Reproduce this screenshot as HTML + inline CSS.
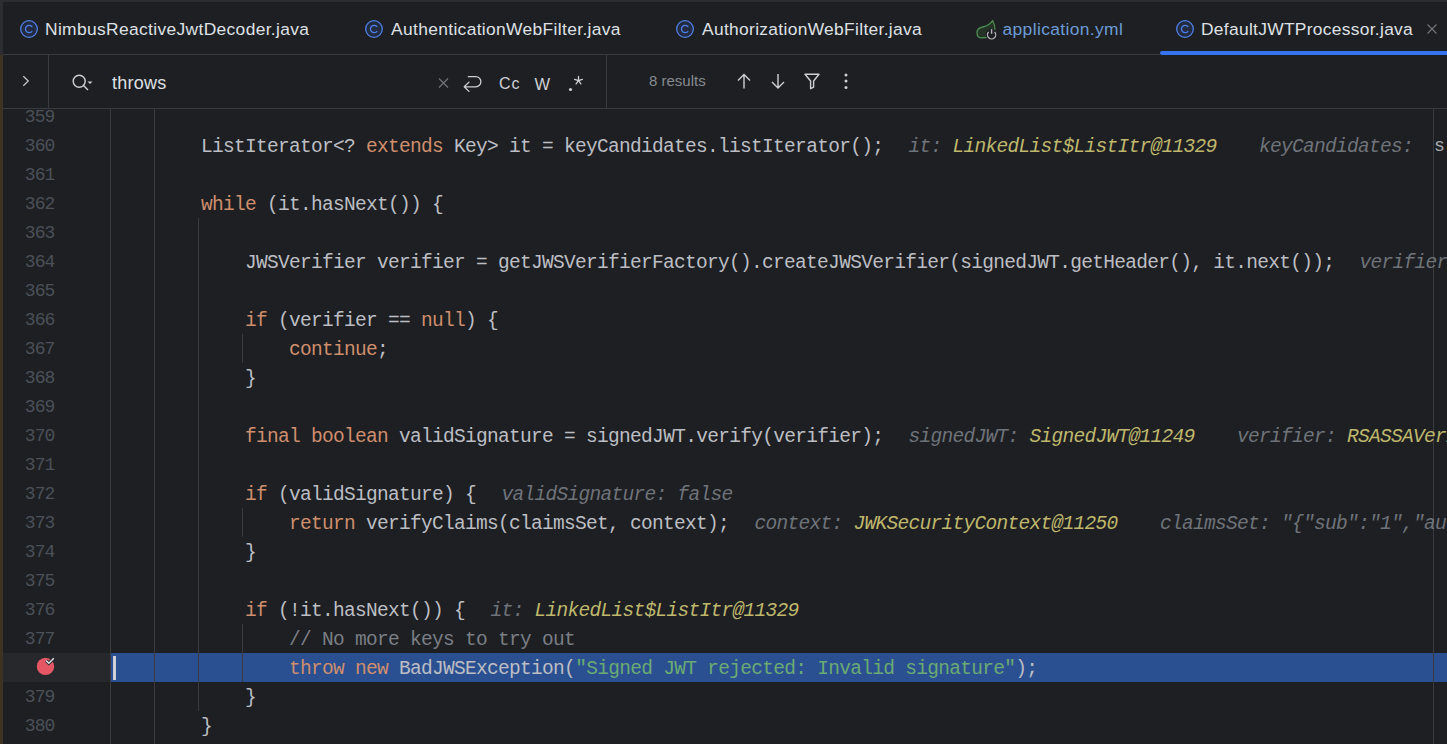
<!DOCTYPE html>
<html><head><meta charset="utf-8"><style>
*{margin:0;padding:0;box-sizing:border-box}
html,body{width:1447px;height:744px;overflow:hidden;background:#1e1f22}
body{position:relative;font-family:"Liberation Sans",sans-serif}
.abs{position:absolute}
.hb{position:absolute;height:1px;background:#393b40}
.vb{position:absolute;width:1px;background:#393b40}
.tab{position:absolute;top:19px;font-size:17.4px;letter-spacing:0.35px;color:#dfe1e5;white-space:pre;line-height:20px}
.cicon{position:absolute;top:20px;width:18px;height:18px}
.sb{position:absolute;white-space:pre;line-height:20px}
.code{position:absolute;left:113px;font-family:"Liberation Mono",monospace;font-size:19.5px;letter-spacing:-0.7px;white-space:pre;color:#bcbec4;line-height:29px;height:29px;margin-top:2px}
.ln{position:absolute;left:0;width:54.5px;text-align:right;font-family:"Liberation Mono",monospace;font-size:18px;letter-spacing:-0.9px;color:#4b5059;line-height:29px;white-space:pre;margin-top:1px}
.k{color:#cf8e6d}
.s{color:#6aab73}
.c{color:#7a7e85}
.hn{color:#6f737a;font-style:italic}
.hv{color:#bfb86c;font-style:italic}
.guide{position:absolute;width:1px;background:#393b40}
</style></head><body>
<div class="abs" style="left:0;top:0;width:1447px;height:2px;background:#2b2d30"></div>
<svg class="cicon" style="left:20px" viewBox="0 0 18 18"><circle cx="9" cy="9" r="8.3" fill="#222b40" stroke="#4f80e8" stroke-width="1.3"/><path d="M12.2 6.9A3.7 3.7 0 1 0 12.2 11.1" fill="none" stroke="#4f80e8" stroke-width="1.3"/></svg>
<div class="tab" style="left:45px">NimbusReactiveJwtDecoder.java</div>
<svg class="cicon" style="left:365px" viewBox="0 0 18 18"><circle cx="9" cy="9" r="8.3" fill="#222b40" stroke="#4f80e8" stroke-width="1.3"/><path d="M12.2 6.9A3.7 3.7 0 1 0 12.2 11.1" fill="none" stroke="#4f80e8" stroke-width="1.3"/></svg>
<div class="tab" style="left:391px">AuthenticationWebFilter.java</div>
<svg class="cicon" style="left:676px" viewBox="0 0 18 18"><circle cx="9" cy="9" r="8.3" fill="#222b40" stroke="#4f80e8" stroke-width="1.3"/><path d="M12.2 6.9A3.7 3.7 0 1 0 12.2 11.1" fill="none" stroke="#4f80e8" stroke-width="1.3"/></svg>
<div class="tab" style="left:702px;letter-spacing:0.32px">AuthorizationWebFilter.java</div>
<svg class="abs" style="left:970px;top:14px" width="32" height="30" viewBox="0 0 32 30"><path d="M22.6 6.5C20.5 10.5 17 12 12.5 13C8.5 14 6.8 16.5 7 19.2C7.3 22 9 23.8 11 23.8L17 23.5C21 22.5 24.5 20 25 17C25.2 13 24 9 22.6 6.5Z" fill="#243325" stroke="#4b8f53" stroke-width="1.3" stroke-linejoin="round"/><circle cx="21.6" cy="20.6" r="5.9" fill="#1e1f22"/><path d="M18.6 18A4.1 4.1 0 1 0 24.6 18" fill="none" stroke="#b4b6bb" stroke-width="1.3"/><path d="M21.6 15.2V19.8" stroke="#b4b6bb" stroke-width="1.4"/></svg>
<div class="tab" style="left:1002.5px;color:#6c9bd6;letter-spacing:0.38px">application.yml</div>
<svg class="cicon" style="left:1176px" viewBox="0 0 18 18"><circle cx="9" cy="9" r="8.3" fill="#222b40" stroke="#4f80e8" stroke-width="1.3"/><path d="M12.2 6.9A3.7 3.7 0 1 0 12.2 11.1" fill="none" stroke="#4f80e8" stroke-width="1.3"/></svg>
<div class="tab" style="left:1201px;letter-spacing:0.3px">DefaultJWTProcessor.java</div>
<svg class="abs" style="left:1426px;top:23px" width="12" height="12" viewBox="0 0 12 12"><path d="M1.5 1.5L10.5 10.5M10.5 1.5L1.5 10.5" stroke="#6f737a" stroke-width="1.2"/></svg>
<div class="abs" style="left:1160px;top:51px;width:287px;height:4px;background:#3574f0;border-radius:2px 0 0 2px"></div>
<div class="hb" style="left:3px;top:54px;width:1157px"></div>
<div class="vb" style="left:48px;top:55px;height:53px"></div>
<svg class="abs" style="left:20px;top:74px" width="12" height="14" viewBox="0 0 12 14"><path d="M3.3 2.3L8.3 7L3.3 11.7" fill="none" stroke="#c9cbd0" stroke-width="1.2"/></svg>
<svg class="abs" style="left:71px;top:73px" width="24" height="20" viewBox="0 0 24 20"><circle cx="8.2" cy="8.2" r="6" fill="none" stroke="#ced0d6" stroke-width="1.4"/><path d="M12.5 12.5L17 17" stroke="#ced0d6" stroke-width="1.4"/><path d="M16.5 8.5H21.5L19 11Z" fill="#ced0d6"/></svg>
<div class="sb" style="left:112px;top:72.5px;font-size:18px;letter-spacing:0.25px;color:#dfe1e5">throws</div>
<svg class="abs" style="left:437px;top:77px" width="13" height="12" viewBox="0 0 13 12"><path d="M2 1.5L11 10.5M11 1.5L2 10.5" stroke="#6f737a" stroke-width="1.2"/></svg>
<svg class="abs" style="left:462px;top:75px" width="21" height="18" viewBox="0 0 21 18"><path d="M6.3 1.6H13.8A5.1 5.1 0 0 1 13.8 11.8H2.4M7 7.1L2.2 11.8L7 16.4" fill="none" stroke="#ced0d6" stroke-width="1.3" stroke-linecap="round" stroke-linejoin="round"/></svg>
<div class="sb" style="left:499px;top:73.5px;font-size:16px;letter-spacing:1px;color:#ced0d6">Cc</div>
<div class="sb" style="left:534.5px;top:73.7px;font-size:16.5px;color:#ced0d6">W</div>
<svg class="abs" style="left:566px;top:74px" width="20" height="20" viewBox="0 0 20 20"><circle cx="4.5" cy="15.5" r="1.6" fill="#ced0d6"/><path d="M12.5 6.6V2.4M12.5 6.6L16.4 5.3M12.5 6.6L14.9 9.9M12.5 6.6L10.1 9.9M12.5 6.6L8.6 5.3" stroke="#ced0d6" stroke-width="1.3" stroke-linecap="round"/></svg>
<div class="vb" style="left:606px;top:55px;height:53px"></div>
<div class="sb" style="left:649px;top:71px;font-size:15px;color:#868a91">8 results</div>
<svg class="abs" style="left:736px;top:73px" width="16" height="17" viewBox="0 0 16 17"><path d="M8 15.5V1.5M2 7.5L8 1.5L14 7.5" fill="none" stroke="#ced0d6" stroke-width="1.4"/></svg>
<svg class="abs" style="left:770px;top:73px" width="16" height="17" viewBox="0 0 16 17"><path d="M8 1V15M2 9L8 15L14 9" fill="none" stroke="#ced0d6" stroke-width="1.4"/></svg>
<svg class="abs" style="left:803px;top:72px" width="18" height="18" viewBox="0 0 18 18"><path d="M2 2.2H16L10.6 9V15.2L7.6 16.7V9Z" fill="none" stroke="#ced0d6" stroke-width="1.4" stroke-linejoin="round"/></svg>
<svg class="abs" style="left:843px;top:73px" width="6" height="17" viewBox="0 0 6 17"><circle cx="3" cy="2" r="1.5" fill="#ced0d6"/><circle cx="3" cy="8" r="1.5" fill="#ced0d6"/><circle cx="3" cy="14.5" r="1.5" fill="#ced0d6"/></svg>
<div class="hb" style="left:3px;top:108px;width:1444px"></div>
<div class="abs" style="left:0;top:109px;width:1447px;height:635px;overflow:hidden">
<div class="abs" style="left:3px;top:544px;width:107px;height:29px;background:#26282b"></div>
<div class="abs" style="left:111px;top:544px;width:1336px;height:29px;background:#2b5091"></div>
<div class="guide" style="left:110px;top:0px;height:635px"></div>
<div class="guide" style="left:154px;top:0px;height:635px"></div>
<div class="guide" style="left:198px;top:109px;height:493px"></div>
<div class="guide" style="left:242px;top:225px;height:29px"></div>
<div class="guide" style="left:242px;top:399px;height:29px"></div>
<div class="guide" style="left:242px;top:515px;height:58px"></div>
<div class="abs" style="left:1433px;top:0;width:1px;height:640px;background:#393b40"></div>
<div class="ln" style="top:-7px">359</div>
<div class="ln" style="top:22px">360</div>
<div class="code" style="top:22px">        ListIterator&lt;? <span class="k">extends</span> Key&gt; it = keyCandidates.listIterator();</div>
<div class="code" style="left:908.5px;top:22px"><span class="hn">it: </span><span class="hv">LinkedList$ListItr@11329</span></div>
<div class="code" style="left:1259.0px;top:22px"><span class="hn">keyCandidates: </span></div>
<div class="ln" style="top:51px">361</div>
<div class="ln" style="top:80px">362</div>
<div class="code" style="top:80px">        <span class="k">while</span> (it.hasNext()) {</div>
<div class="ln" style="top:109px">363</div>
<div class="ln" style="top:138px">364</div>
<div class="code" style="top:138px">            JWSVerifier verifier = getJWSVerifierFactory().createJWSVerifier(signedJWT.getHeader(), it.next());</div>
<div class="code" style="left:1359.5px;top:138px"><span class="hn">verifier: </span><span class="hv">JWSVerifier@1</span></div>
<div class="ln" style="top:167px">365</div>
<div class="ln" style="top:196px">366</div>
<div class="code" style="top:196px">            <span class="k">if</span> (verifier == <span class="k">null</span>) {</div>
<div class="ln" style="top:225px">367</div>
<div class="code" style="top:225px">                <span class="k">continue</span>;</div>
<div class="ln" style="top:254px">368</div>
<div class="code" style="top:254px">            }</div>
<div class="ln" style="top:283px">369</div>
<div class="ln" style="top:312px">370</div>
<div class="code" style="top:312px">            <span class="k">final</span> <span class="k">boolean</span> validSignature = signedJWT.verify(verifier);</div>
<div class="code" style="left:908.5px;top:312px"><span class="hn">signedJWT: </span><span class="hv">SignedJWT@11249</span></div>
<div class="code" style="left:1237.0px;top:312px"><span class="hn">verifier: </span><span class="hv">RSASSAVerifier@11251</span></div>
<div class="ln" style="top:341px">371</div>
<div class="ln" style="top:370px">372</div>
<div class="code" style="top:370px">            <span class="k">if</span> (validSignature) {</div>
<div class="code" style="left:501.5px;top:370px"><span class="hn">validSignature: false</span></div>
<div class="ln" style="top:399px">373</div>
<div class="code" style="top:399px">                <span class="k">return</span> verifyClaims(claimsSet, context);</div>
<div class="code" style="left:754.5px;top:399px"><span class="hn">context: </span><span class="hv">JWKSecurityContext@11250</span></div>
<div class="code" style="left:1160.0px;top:399px"><span class="hn">claimsSet: </span><span class="hn">"{"sub":"1","aud":"x"}"</span></div>
<div class="ln" style="top:428px">374</div>
<div class="code" style="top:428px">            }</div>
<div class="ln" style="top:457px">375</div>
<div class="ln" style="top:486px">376</div>
<div class="code" style="top:486px">            <span class="k">if</span> (!it.hasNext()) {</div>
<div class="code" style="left:490.5px;top:486px"><span class="hn">it: </span><span class="hv">LinkedList$ListItr@11329</span></div>
<div class="ln" style="top:515px">377</div>
<div class="code" style="top:515px">                <span class="c">// No more keys to try out</span></div>
<div class="code" style="top:544px">                <span class="k">throw</span> <span class="k">new</span> BadJWSException(<span class="s">"Signed JWT rejected: Invalid signature"</span>);</div>
<div class="ln" style="top:573px">379</div>
<div class="code" style="top:573px">            }</div>
<div class="ln" style="top:602px">380</div>
<div class="code" style="top:602px">        }</div>
<div class="abs" style="left:1435px;top:26px;font-size:18px;line-height:20px;color:#a8abb0">s</div>
<svg class="abs" style="left:35px;top:545px" width="22" height="22" viewBox="0 0 22 22"><circle cx="10.5" cy="12.4" r="8.7" fill="#e55765"/><path d="M11.2 6.6L13.8 9.2L18.8 4.3" fill="none" stroke="#26282b" stroke-width="3.3"/><path d="M11.2 6.6L13.8 9.2L18.8 4.3" fill="none" stroke="#dfe1e5" stroke-width="1.5"/></svg>
<div class="abs" style="left:113px;top:547px;width:3px;height:24px;background:#ced0d6"></div>
</div>
<div class="abs" style="left:0;top:0;width:3px;height:55px;background:#2b2d30"></div>
<div class="abs" style="left:0;top:55px;width:3px;height:689px;background:#3e3323"></div>
</body></html>
